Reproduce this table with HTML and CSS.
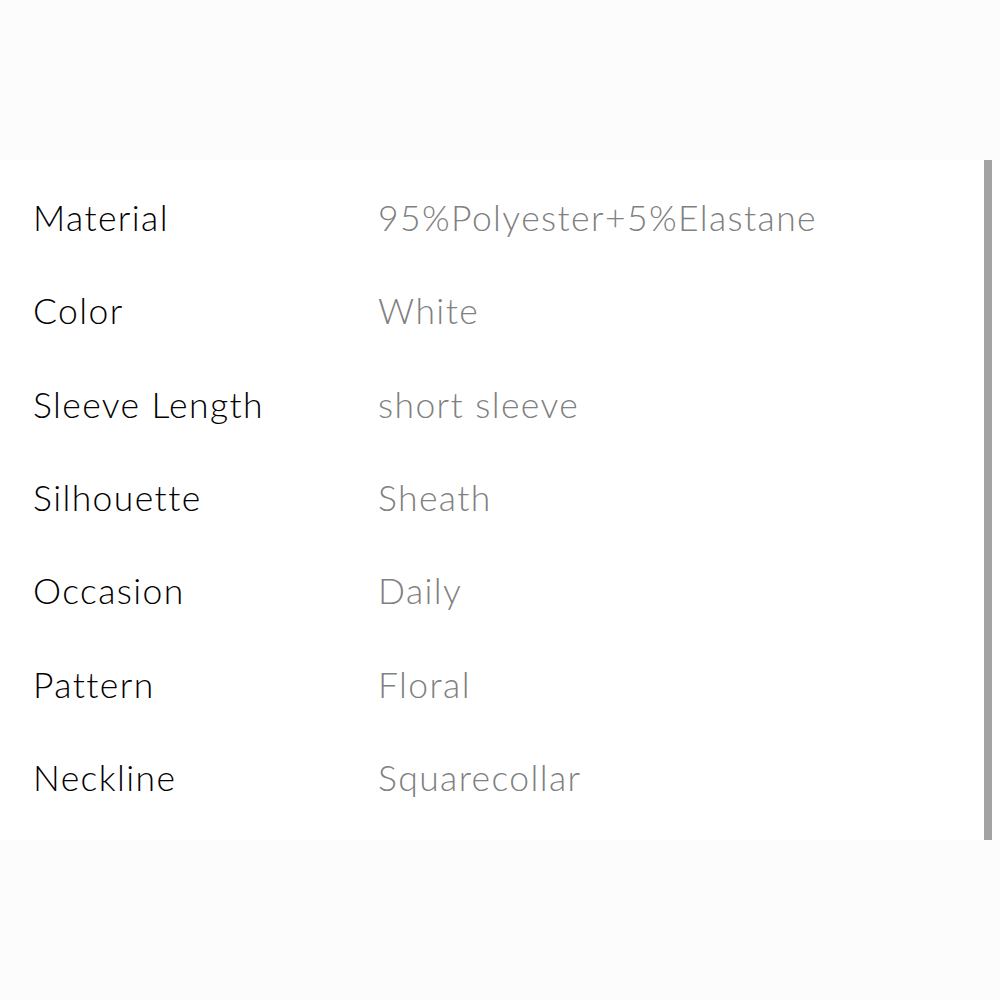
FILE: index.html
```html
<!DOCTYPE html>
<html>
<head>
<meta charset="utf-8">
<link rel="stylesheet" href="styles.css">
</head>
<body>
<div class="top"></div>
<div class="panel">
  <div class="specs">
    <div class="row"><span class="label">Material</span><span class="value">95%Polyester+5%Elastane</span></div>
    <div class="row"><span class="label">Color</span><span class="value">White</span></div>
    <div class="row"><span class="label">Sleeve Length</span><span class="value">short sleeve</span></div>
    <div class="row"><span class="label">Silhouette</span><span class="value">Sheath</span></div>
    <div class="row"><span class="label">Occasion</span><span class="value">Daily</span></div>
    <div class="row"><span class="label">Pattern</span><span class="value">Floral</span></div>
    <div class="row"><span class="label">Neckline</span><span class="value">Squarecollar</span></div>
  </div>
  <div class="scrollbar"></div>
</div>
<div class="bottom"></div>
</body>
</html>
```
FILE: styles.css
```css
html, body {
  margin: 0;
  padding: 0;
  background: #fcfcfc;
  font-family: "Lato", "Noto Sans", sans-serif;
}
.top {
  height: 160px;
}
.panel {
  background: #ffffff;
  height: 680px;
  display: flex;
}
.specs {
  flex: 1;
  padding: 11px 0 0 33px;
}
.row {
  display: grid;
  grid-template-columns: 345px 1fr;
  height: 93.33px;
  align-items: center;
  font-size: 35.5px;
  font-weight: 300;
  letter-spacing: 1.4px;
  line-height: 1;
}
.label {
  color: #000000;
}
.value {
  color: #808080;
}
.scrollbar {
  width: 8px;
  margin-right: 8px;
  background: #a3a3a3;
}
.bottom {
  height: 160px;
}
```
